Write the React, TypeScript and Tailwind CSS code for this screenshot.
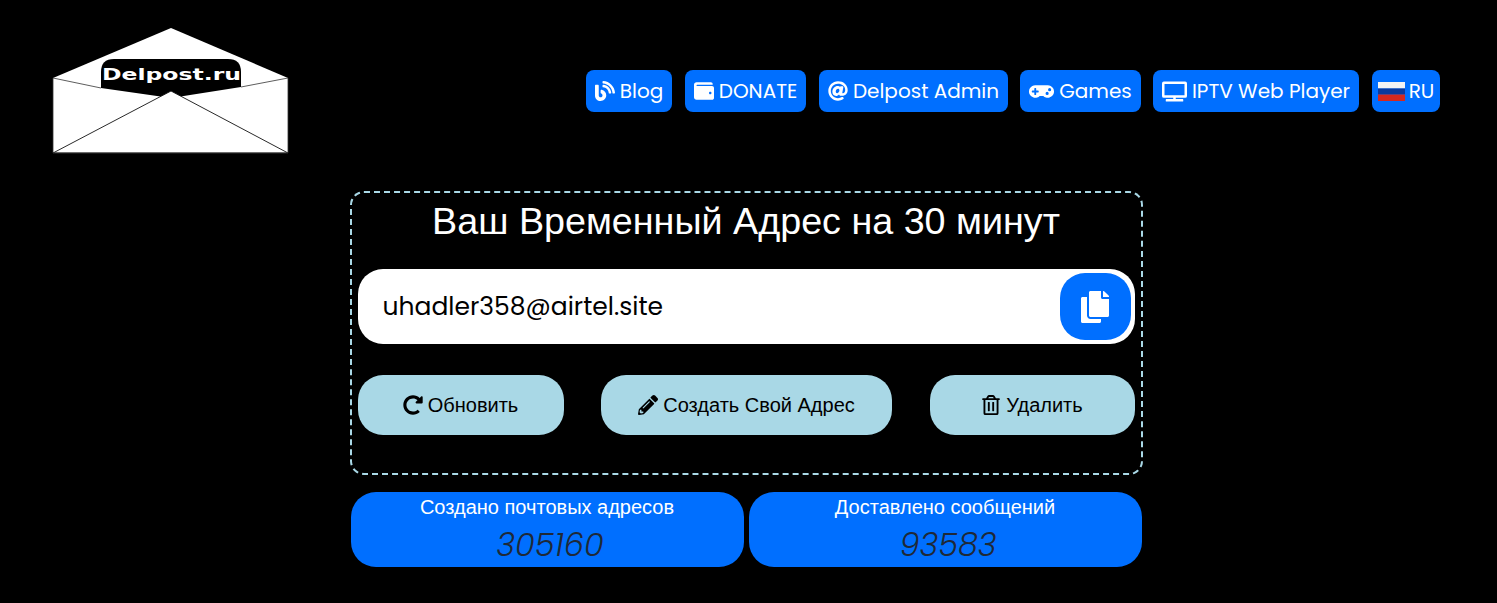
import { FaBlog, FaWallet, FaAt, FaGamepad, FaTv, FaCopy, FaRedoAlt, FaPencilAlt, FaRegTrashAlt } from "react-icons/fa";
import type { ReactNode } from "react";

const poppins = "font-['Poppins','Inter','Noto_Sans',sans-serif]";

function Logo() {
  return (
    <svg width="237" height="127" viewBox="0 0 237 127" className="block">
      <polygon points="119,1 236,51 236,126 1,126 1,51" fill="#fff" />
      <path d="M49 45 Q49 32 62 32 H176 Q189 32 189 45 V60 L119 71 L49 61 Z" fill="#000" />
      <polygon points="119,64 236,126 1,126" fill="#fff" stroke="#111" strokeWidth="0.9" />
      <path d="M1 51 L49 61 M189 60 L236 51 M236 51 V126 H1 V51" stroke="#333" strokeWidth="0.8" fill="none" />
      <text x="119.5" y="53" textAnchor="middle" fill="#fff" fontFamily="'DejaVu Sans',sans-serif" fontWeight="700" fontSize="16" textLength="139" lengthAdjust="spacingAndGlyphs">Delpost.ru</text>
    </svg>
  );
}

function NavLink({ icon, label, width }: { icon: ReactNode; label: string; width: string }) {
  return (
    <a className={`flex h-[42px] items-center justify-center gap-[5px] rounded-lg bg-[#006fff] text-white text-[20px] whitespace-nowrap ${width}`}>
      {icon}
      <span>{label}</span>
    </a>
  );
}

function ActionButton({ icon, label, width }: { icon: ReactNode; label: string; width: string }) {
  return (
    <button className={`flex h-[60px] items-center justify-center gap-[5px] rounded-[25px] bg-[#a9d8e6] text-black text-[20px] ${width}`}>
      {icon}
      <span>{label}</span>
    </button>
  );
}

function Stat({ label, value }: { label: string; value: string }) {
  return (
    <div className="flex h-[75px] w-[393px] flex-col items-center rounded-[25px] bg-[#006fff]">
      <div className="mt-[3px] text-[20px] leading-[24px] text-white">{label}</div>
      <div className={`mt-[6px] pl-[6px] text-[32px] leading-[40px] font-light italic text-[#1f2937] ${poppins}`}>{value}</div>
    </div>
  );
}

export default function App() {
  return (
    <div className="h-[603px] w-full overflow-hidden bg-black font-['Liberation_Sans',Arial,sans-serif]">
      <header className="flex h-[191px] items-start justify-between pl-[52px] pr-[57px] pt-[27px]">
        <Logo />
        <nav className={`mt-[43px] flex ${poppins}`}>
          <NavLink width="w-[86px]" label="Blog" icon={<FaBlog className="size-[20px]" />} />
          <NavLink width="ml-[13px] w-[121px]" label="DONATE" icon={<FaWallet className="size-[20px]" />} />
          <NavLink width="ml-[13px] w-[189px]" label="Delpost Admin" icon={<FaAt className="size-[20px]" />} />
          <NavLink width="ml-[12px] w-[121px]" label="Games" icon={<FaGamepad className="size-[25px]" />} />
          <NavLink width="ml-[12px] w-[206px]" label="IPTV Web Player" icon={<FaTv className="size-[25px]" />} />
          <a className="ml-[13px] flex h-[42px] w-[68px] items-center justify-center gap-[4px] rounded-lg bg-[#006fff] text-[20px] text-white">
            <svg width="27" height="19" viewBox="0 0 27 19" className="shrink-0">
              <rect width="27" height="6.5" fill="#f4f4f4" />
              <rect y="6.5" width="27" height="6" fill="#0b3a9e" />
              <rect y="12.5" width="27" height="6.5" fill="#d5281f" />
            </svg>
            <span>RU</span>
          </a>
        </nav>
      </header>

      <main className="flex flex-col items-center">
        <section className="ml-[-5px] box-border h-[284px] w-[793px] rounded-[14px] border-2 border-dashed border-[#a9d8e6] px-[6px]">
          <h1 className="mt-[5px] text-center text-[37.7px] leading-[46px] text-white">Ваш Временный Адрес на 30 минут</h1>
          <div className="mt-[25px] flex h-[75px] items-center justify-between rounded-[25px] bg-white pl-[25px] pr-[4px]">
            <span className={`text-[25px] text-black ${poppins}`}>uhadler358@airtel.site</span>
            <button className="flex h-[67px] w-[71px] items-center justify-center rounded-[25px] bg-[#006fff] text-white">
              <FaCopy className="size-[32px]" />
            </button>
          </div>
          <div className="mt-[31px] flex justify-between">
            <ActionButton width="w-[206px]" label="Обновить" icon={<FaRedoAlt className="size-[20px]" />} />
            <ActionButton width="w-[291px]" label="Создать Свой Адрес" icon={<FaPencilAlt className="size-[20px]" />} />
            <ActionButton width="w-[205px]" label="Удалить" icon={<FaRegTrashAlt className="size-[20px]" />} />
          </div>
        </section>
        <div className="ml-[-5px] mt-[17px] flex w-[791px] justify-between">
          <Stat label="Создано почтовых адресов" value="305160" />
          <Stat label="Доставлено сообщений" value="93583" />
        </div>
      </main>
    </div>
  );
}
